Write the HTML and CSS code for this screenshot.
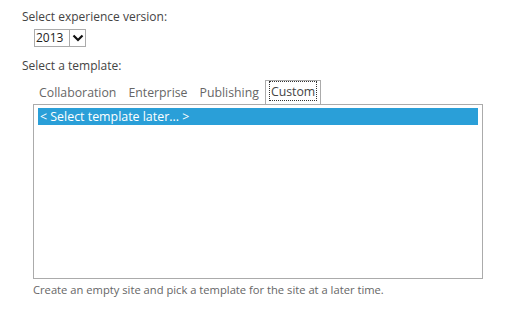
FILE: index.html
```html
<!DOCTYPE html>
<html>
<head>
<meta charset="utf-8">
<link rel="stylesheet" href="styles.css">
</head>
<body>
<div class="page">
  <div class="label">Select experience version:</div>
  <div class="select">
    <span class="select-value">2013</span>
    <span class="select-btn">
      <svg width="12" height="8" viewBox="0 0 12 8"><path d="M1.5 1.5 L6 6 L10.5 1.5" fill="none" stroke="#111" stroke-width="2.2"/></svg>
    </span>
  </div>
  <div class="label label-2">Select a template:</div>
  <div class="templates">
    <div class="tabs">
      <span class="tab">Collaboration</span>
      <span class="tab">Enterprise</span>
      <span class="tab">Publishing</span>
      <span class="tab tab-active"><span class="focus">Custom</span></span>
    </div>
    <div class="listbox">
      <div class="item item-selected">&lt; Select template later... &gt;</div>
    </div>
    <div class="desc">Create an empty site and pick a template for the site at a later time.</div>
  </div>
</div>
</body>
</html>
```
FILE: styles.css
```css
html, body {
  margin: 0;
  padding: 0;
  background: #fff;
}
body {
  font-family: "Open Sans", "Noto Sans", sans-serif;
  font-size: 12px;
  color: #444;
}
.page {
  padding: 7px 0 0 22px;
}
.label {
  height: 19px;
  line-height: 19px;
}
.select {
  margin: 3px 0 0 12px;
  display: flex;
  width: 50px;
  height: 16px;
  border: 1px solid #ababab;
  background: #fff;
}
.select-value {
  flex: 1;
  line-height: 16px;
  padding-left: 1px;
  color: #222;
}
.select-btn {
  width: 15px;
  border-left: 1px solid #ababab;
  display: flex;
  align-items: center;
  justify-content: center;
}
.label-2 {
  margin-top: 9px;
}
.templates {
  margin-left: 11px;
  width: 450px;
}
.tabs {
  display: flex;
  height: 23px;
  margin-top: 6px;
  padding-left: 0;
  align-items: flex-end;
  font-size: 12.3px;
}
.tab {
  padding: 0 6px;
  height: 21px;
  line-height: 20px;
  color: #666;
}
.tab-active {
  border: 1px solid #ababab;
  border-bottom: none;
  height: 22px;
  line-height: 20px;
  padding: 1px 4px 0 4px;
  margin-left: 0;
  background: #fff;
  color: #444;
  display: flex;
  align-items: flex-start;
}
.focus {
  display: block;
  height: 18px;
  line-height: 19px;
  outline: 1px dotted #333;
  outline-offset: 0;
  padding: 0 1px;
}
.listbox {
  border: 1px solid #ababab;
  height: 167px;
  padding: 3px 4px;
}
.item {
  height: 17px;
  line-height: 17px;
  padding-left: 2px;
  font-size: 12.4px;
}
.item-selected {
  background: #2a9fd8;
  color: #fff;
}
.desc {
  margin-top: 3px;
  height: 15px;
  line-height: 15px;
  font-size: 11.2px;
  color: #666;
}
```
